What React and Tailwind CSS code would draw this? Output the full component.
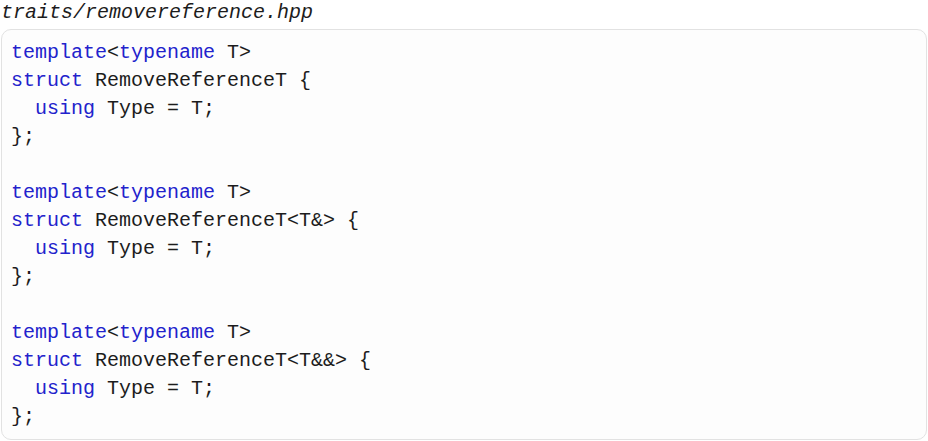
const kw = 'text-[#2222cc]';

const blocks = [
  'RemoveReferenceT',
  'RemoveReferenceT<T&>',
  'RemoveReferenceT<T&&>',
];

function Block({ name }) {
  return (
    <>
      <div>
        <span className={kw}>template</span>&lt;<span className={kw}>typename</span> T&gt;
      </div>
      <div>
        <span className={kw}>struct</span> {name} {'{'}
      </div>
      <div>
        {'  '}<span className={kw}>using</span> Type = T;
      </div>
      <div>{'};'}</div>
    </>
  );
}

export default function App() {
  return (
    <div className="w-[928px] h-[441px] bg-white text-[#1c1c1c] font-['Liberation_Mono',monospace] text-[20px]">
      <div className="h-[29px] leading-[26px] italic pl-px">traits/removereference.hpp</div>
      <div className="mx-[1px] h-[411px] rounded-[10px] border border-[#e2e2e2] bg-[#fdfdfd] pl-[9px] pt-[9px] leading-[28px] whitespace-pre">
        {blocks.map((b, i) => (
          <div key={b}>
            {i > 0 && <div>&nbsp;</div>}
            <Block name={b} />
          </div>
        ))}
      </div>
    </div>
  );
}
